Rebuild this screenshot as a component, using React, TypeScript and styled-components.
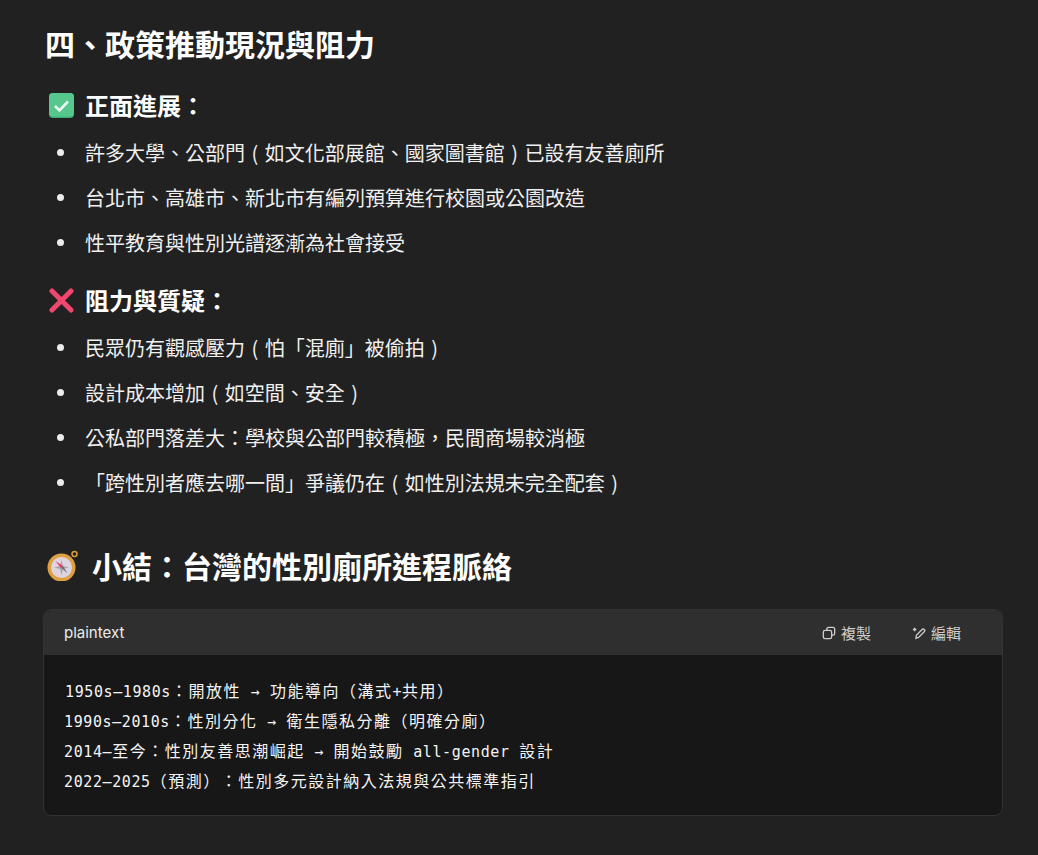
import React from "react";
import styled, { createGlobalStyle } from "styled-components";

const Global = createGlobalStyle`
  html, body { margin: 0; background: #212121; }
  body { font-family: "Noto Sans CJK TC", "Liberation Sans", sans-serif; color: #ececec; overflow: hidden; text-spacing-trim: space-all; }
`;
const Page = styled.main`
  height: 855px; box-sizing: border-box; padding: 23px 35px 0 43px; overflow: hidden;
`;
const H2 = styled.h2`
  margin: 0 0 0 2px; font-size: 30px; line-height: 40px; font-weight: 700; color: #fff;
  display: flex; align-items: center;
`;
const Summary = styled(H2)`
  margin: 40px 0 0 3px; gap: 14px;
`;
const H3 = styled.h3`
  margin: 0 0 0 6px; font-size: 24px; line-height: 32px; font-weight: 700; color: #fff;
  display: flex; align-items: center; gap: 11px;
`;
const Sec = styled.section<{ $top: number }>`
  margin-top: ${p => p.$top}px;
`;
const List = styled.ul`
  margin: 9px 0 0; padding: 0 0 0 42px; list-style: none;
`;
const Item = styled.li`
  position: relative; font-size: 20px; line-height: 45px; word-spacing: 2px; color: #f0f0f0; white-space: nowrap;
  &::before { content: ""; position: absolute; left: -28px; top: 19px; width: 7px; height: 7px; border-radius: 50%; background: #ececec; }
`;
const Code = styled.div`
  margin-top: 24px; width: 960px; height: 207px; box-sizing: border-box; border: 1px solid #333; border-radius: 8px; overflow: hidden; background: #171717;
`;
const CodeHead = styled.div`
  height: 45px; background: #2f2f2f; display: flex; align-items: center; padding: 0 41px 0 20px; font-size: 15px; color: #ececec;
  font-family: "Inter", "Noto Sans CJK TC", sans-serif;
`;
const Lang = styled.span` flex: 1; `;
const Tool = styled.button`
  all: unset; display: flex; align-items: center; gap: 5px; font-size: 15px; color: #cdcdcd; margin-left: 41px;
  font-family: "Noto Sans CJK TC", sans-serif;
`;
const Pre = styled.div`
  padding: 22px 20px; font-family: "DejaVu Sans Mono", monospace; font-size: 15px; letter-spacing: 0.6px; line-height: 30px; color: #f4f4f4; white-space: pre;
`;
const Line = styled.div`
  &:first-child { padding-left: 1px; }
`;
const Cjk = styled.span`
  font-family: "Noto Sans CJK TC", sans-serif; font-size: 16px; line-height: 1; letter-spacing: 1.5px;
`;
const CompassWrap = styled.span`
  display: flex; margin: 0 -1px 0 1px;
`;

const Check = () => (
  <svg width="25" height="25" viewBox="0 0 25 25">
    <rect width="25" height="25" rx="4" fill="#3fae75"/>
    <rect width="25" height="23.500" rx="4" fill="#56c78d"/>
    <path d="M6 13l4.500 4.500L19 8.500" fill="none" stroke="#eaf7f0" strokeWidth="2.600"/>
  </svg>
);
const Cross = () => (
  <svg width="25" height="25" viewBox="0 0 25 25"><path d="M3 3l19 19M22 3L3 22" stroke="#f0476f" strokeWidth="5" strokeLinecap="round"/></svg>
);
const Compass = () => (
  <CompassWrap>
    <svg width="32" height="32" viewBox="0 0 32 32">
      <circle cx="27.500" cy="5" r="2.500" fill="none" stroke="#d9a040" strokeWidth="1.500"/>
      <circle cx="14.500" cy="18.500" r="14" fill="#dfa044"/>
      <circle cx="14.500" cy="18.500" r="10.500" fill="#ddd4df"/>
      <path d="M14.500 11l1.500 6 6 1.500-6 1.500-1.500 6-1.500-6-6-1.500 6-1.500z" fill="#a9a5ad"/>
      <path d="M8.500 12l7.500 5-2 2z" fill="#e8366a"/>
      <path d="M20.500 24.500l-6.500-6 2-1.500z" fill="#6f6d74"/>
    </svg>
  </CompassWrap>
);
const CopyIcon = () => (
  <svg width="14" height="14" viewBox="0 0 16 16" fill="none" stroke="#cdcdcd" strokeWidth="1.500"><rect x="1.500" y="5" width="9.500" height="9.500" rx="2"/><path d="M5.500 5V3.500a2 2 0 0 1 2-2h5a2 2 0 0 1 2 2v5a2 2 0 0 1-2 2H11"/></svg>
);
const EditIcon = () => (
  <svg width="14" height="14" viewBox="0 0 16 16" fill="none" stroke="#cdcdcd" strokeWidth="1.500"><path d="M4.500 14l.5-3.500L11.500 4a1.600 1.600 0 0 1 2.500 2.500L7.500 13z"/><path d="M1 4h4M3 2v4"/></svg>
);

const good = ["許多大學、公部門 ( 如文化部展館、國家圖書館 ) 已設有友善廁所", "台北市、高雄市、新北市有編列預算進行校園或公園改造", "性平教育與性別光譜逐漸為社會接受"];
const bad = ["民眾仍有觀感壓力 ( 怕「混廁」被偷拍 )", "設計成本增加 ( 如空間、安全 )", "公私部門落差大：學校與公部門較積極，民間商場較消極", "「跨性別者應去哪一間」爭議仍在 ( 如性別法規未完全配套 )"];

export default function App() {
  return (
    <Page>
      <Global />
      <H2>四、政策推動現況與阻力</H2>
      <Sec $top={26}>
        <H3><Check />正面進展：</H3>
        <List>{good.map(t => <Item key={t}>{t}</Item>)}</List>
      </Sec>
      <Sec $top={19}>
        <H3><Cross />阻力與質疑：</H3>
        <List>{bad.map(t => <Item key={t}>{t}</Item>)}</List>
      </Sec>
      <Summary><Compass />小結：台灣的性別廁所進程脈絡</Summary>
      <Code>
        <CodeHead>
          <Lang>plaintext</Lang>
          <Tool><CopyIcon />複製</Tool>
          <Tool><EditIcon />編輯</Tool>
        </CodeHead>
        <Pre>
          <Line>1950s–1980s<Cjk>：開放性</Cjk> → <Cjk>功能導向（溝式</Cjk>+<Cjk>共用）</Cjk></Line>
          <Line>1990s–2010s<Cjk>：性別分化</Cjk> → <Cjk>衛生隱私分離（明確分廁）</Cjk></Line>
          <Line>2014–<Cjk>至今：性別友善思潮崛起</Cjk> → <Cjk>開始鼓勵</Cjk> all-gender <Cjk>設計</Cjk></Line>
          <Line>2022–2025<Cjk>（預測）：性別多元設計納入法規與公共標準指引</Cjk></Line>
        </Pre>
      </Code>
    </Page>
  );
}
